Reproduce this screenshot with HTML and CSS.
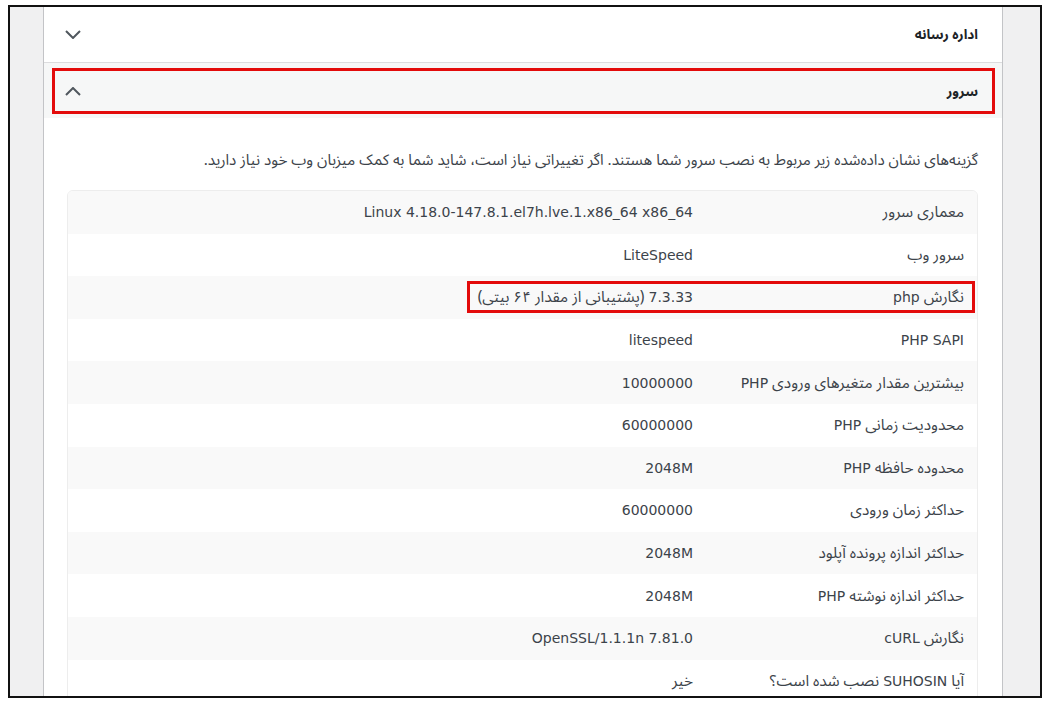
FILE: index.html
```html
<!DOCTYPE html>
<html lang="fa">
<head>
<meta charset="utf-8">
<link rel="stylesheet" href="styles.css">
</head>
<body>
<div class="frame">
  <div class="panel" dir="rtl">
    <div class="acc-head">
      <span class="acc-title">اداره رسانه</span>
      <svg class="chev" width="16" height="9" viewBox="0 0 16 9"><polyline points="1,1 8,8 15,1" fill="none" stroke="#50575e" stroke-width="2"/></svg>
    </div>
    <div class="acc-head-open">
      <div class="mark-box">
        <span class="acc-title">سرور</span>
        <svg class="chev" width="16" height="9" viewBox="0 0 16 9"><polyline points="1,8 8,1 15,8" fill="none" stroke="#50575e" stroke-width="2"/></svg>
      </div>
    </div>
    <div class="acc-body">
      <p class="desc">گزینه‌های نشان داده‌شده زیر مربوط به نصب سرور شما هستند. اگر تغییراتی نیاز است، شاید شما به کمک میزبان وب خود نیاز دارید.</p>
      <div class="info">
        <div class="row"><div class="lbl">معماری سرور</div><div class="val"><span class="lat">Linux 4.18.0-147.8.1.el7h.lve.1.x86_64 x86_64</span></div></div>
        <div class="row"><div class="lbl">سرور وب</div><div class="val"><span class="lat">LiteSpeed</span></div></div>
        <div class="row marked"><div class="lbl">نگارش <span class="lat">php</span></div><div class="val"><span class="lat">7.3.33</span> (پشتیبانی از مقدار ۶۴ بیتی)</div></div>
        <div class="row"><div class="lbl"><span class="lat">PHP SAPI</span></div><div class="val"><span class="lat">litespeed</span></div></div>
        <div class="row"><div class="lbl">بیشترین مقدار متغیرهای ورودی <span class="lat">PHP</span></div><div class="val"><span class="lat">10000000</span></div></div>
        <div class="row"><div class="lbl">محدودیت زمانی <span class="lat">PHP</span></div><div class="val"><span class="lat">60000000</span></div></div>
        <div class="row"><div class="lbl">محدوده حافظه <span class="lat">PHP</span></div><div class="val"><span class="lat">2048M</span></div></div>
        <div class="row"><div class="lbl">حداکثر زمان ورودی</div><div class="val"><span class="lat">60000000</span></div></div>
        <div class="row"><div class="lbl">حداکثر اندازه پرونده آپلود</div><div class="val"><span class="lat">2048M</span></div></div>
        <div class="row"><div class="lbl">حداکثر اندازه نوشته <span class="lat">PHP</span></div><div class="val"><span class="lat">2048M</span></div></div>
        <div class="row"><div class="lbl">نگارش <span class="lat">cURL</span></div><div class="val"><span class="lat">OpenSSL/1.1.1n 7.81.0</span></div></div>
        <div class="row"><div class="lbl">آیا <span class="lat">SUHOSIN</span> نصب شده است؟</div><div class="val">خیر</div></div>
      </div>
    </div>
  </div>
</div>
</body>
</html>
```

FILE: styles.css
```css
html, body {
  margin: 0;
  padding: 0;
  background: #ffffff;
}

body {
  font-family: "DejaVu Sans", "Noto Sans", sans-serif;
  color: #3c434a;
  padding: 5px 0 0 8px;
}

.frame {
  width: 1030px;
  height: 689px;
  border: 2px solid #111111;
  background: #f0f0f1;
  overflow: hidden;
}

.panel {
  margin-left: 33px;
  width: 958px;
  height: 100%;
  border-left: 1px solid #c3c4c7;
  border-right: 1px solid #c3c4c7;
  background: #ffffff;
  direction: rtl;
}

.acc-head {
  height: 56px;
  box-sizing: border-box;
  border-bottom: 1px solid #dcdcde;
  display: flex;
  align-items: center;
  justify-content: space-between;
  padding: 0 24px 0 21px;
}

.acc-title {
  font-family: "Noto Sans Arabic", "Vazirmatn", "DejaVu Sans", sans-serif;
  font-size: 13.5px;
  font-weight: bold;
  color: #1d2327;
}

.chev {
  display: block;
}

.acc-head-open {
  height: 55px;
  box-sizing: border-box;
  background: #f6f7f7;
  padding: 5px 7px 4px 8px;
}

.mark-box {
  height: 100%;
  box-sizing: border-box;
  border: 3px solid #e30b0b;
  display: flex;
  align-items: center;
  justify-content: space-between;
  padding: 0 14px 0 10px;
}

.acc-body {
  padding: 32px 24px 0 23px;
}

.desc {
  margin: 0 0 20px;
  font-family: "Noto Sans Arabic", "DejaVu Sans", sans-serif;
  font-size: 15.2px;
  line-height: 20px;
  color: #3c434a;
}

.info {
  border: 1px solid #ededed;
  border-radius: 6px;
  overflow: hidden;
}

.row {
  display: grid;
  grid-template-columns: 273px 1fr;
  height: 42.6px;
  align-items: center;
  font-family: "Noto Sans Arabic", "DejaVu Sans", sans-serif;
  font-size: 15.4px;
  line-height: 20px;
  position: relative;
}

.row:nth-child(odd) {
  background: #f9f9f9;
}

.lbl {
  padding-right: 13px;
  color: #3c434a;
}

.val {
  padding-right: 11px;
  color: #3c434a;
}

.lat {
  font-family: "DejaVu Sans", sans-serif;
  font-size: 14px;
}

.row.marked::after {
  content: "";
  position: absolute;
  right: 2px;
  top: 5px;
  width: 508px;
  height: 32px;
  box-sizing: border-box;
  border: 3px solid #e30b0b;
}
```
